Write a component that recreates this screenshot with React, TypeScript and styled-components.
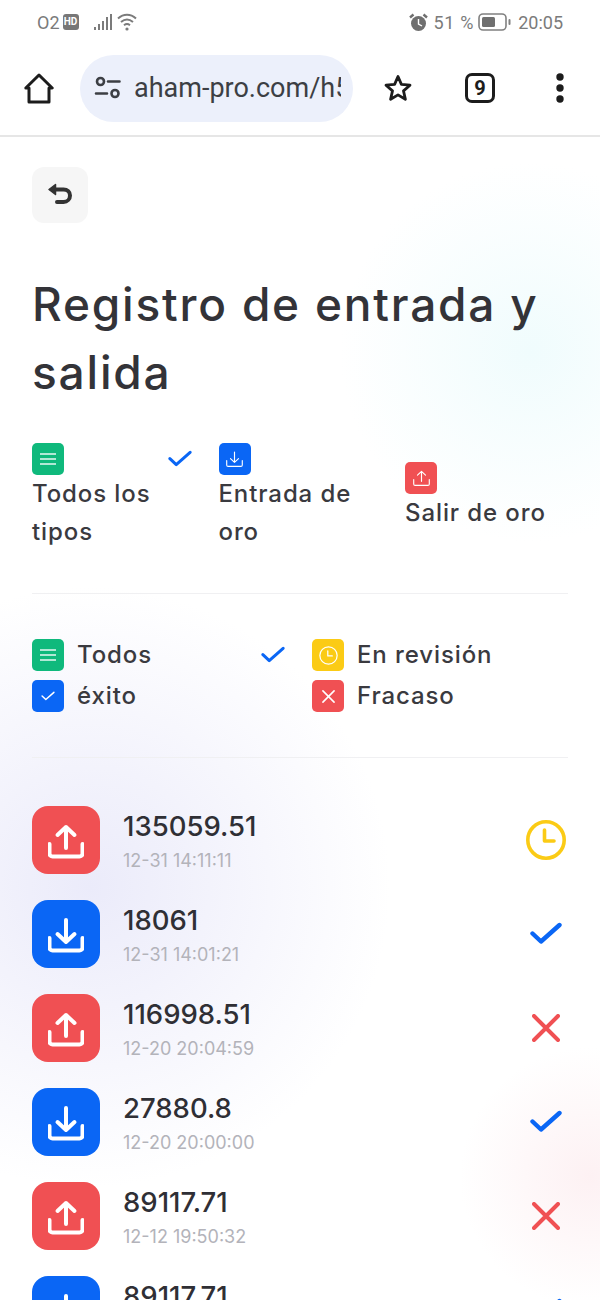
import React, { FunctionComponent } from 'react';
import styled, { createGlobalStyle } from 'styled-components';

const GlobalStyle = createGlobalStyle`
  html, body {
    margin: 0;
    padding: 0;
    background: #fff;
  }

  body {
    font-family: Inter, "Liberation Sans", sans-serif;
    color: #333338;
  }
`;

const Screen = styled.div`
  width: 600px;
  height: 1300px;
  overflow: hidden;
  display: flex;
  flex-direction: column;
`;

const StatusBar = styled.div`
  height: 44px;
  flex: none;
  display: flex;
  align-items: center;
  justify-content: space-between;
  padding: 0 37px;
  color: #7b7b7b;
  font-family: Roboto, sans-serif;
  font-size: 18px;
`;

const StatusGroup = styled.div`
  display: flex;
  align-items: center;
`;

const HdBadge = styled.span`
  margin-left: 3px;
  width: 16px;
  height: 16px;
  border-radius: 3px;
  background: #777;
  color: #fff;
  font-size: 10px;
  font-weight: 700;
  line-height: 16px;
  text-align: center;
`;

const Percent = styled.span`
  letter-spacing: 0.7px;
`;

const BrowserBar = styled.div`
  height: 93px;
  flex: none;
  display: flex;
  align-items: center;
  padding: 0 0 3px 24px;
  box-sizing: border-box;
  border-bottom: 2px solid #e6e6e6;
`;

const AddressPill = styled.div`
  width: 273px;
  height: 67px;
  margin-left: 26px;
  box-sizing: border-box;
  padding: 0 12px 0 14px;
  display: flex;
  align-items: center;
  gap: 12px;
  border-radius: 34px;
  background: #ecf0fb;
  overflow: hidden;
`;

const AddressText = styled.span`
  flex: 1;
  min-width: 0;
  overflow: hidden;
  white-space: nowrap;
  font-family: Roboto, sans-serif;
  font-size: 27px;
  color: #3c3f44;
`;

const BrowserActions = styled.div`
  flex: 1;
  display: flex;
  padding-left: 4px;
`;

const ActionSlot = styled.div`
  flex: 1;
  display: flex;
  justify-content: center;
  align-items: center;
`;

const TabCount = styled.span`
  width: 30px;
  height: 30px;
  margin-left: 3px;
  box-sizing: border-box;
  border: 3px solid #1c1c1c;
  border-radius: 7px;
  font-family: Roboto, sans-serif;
  font-size: 20px;
  font-weight: 700;
  line-height: 24px;
  text-align: center;
  color: #1c1c1c;
`;

const Page = styled.main`
  flex: 1;
  padding: 30px 32px 0;
  background:
    radial-gradient(circle 190px at 530px 215px, #f0fcfd 0%, rgba(240, 252, 253, 0) 100%),
    radial-gradient(circle 300px at 90px 750px, #ebebfa 0%, rgba(235, 235, 250, 0) 100%),
    radial-gradient(circle 130px at 590px 1040px, #fdf1f3 0%, rgba(253, 241, 243, 0) 100%),
    #fff;
`;

const BackButton = styled.button`
  display: flex;
  align-items: center;
  justify-content: center;
  width: 56px;
  height: 56px;
  padding: 0;
  border: none;
  border-radius: 12px;
  background: #f6f6f6;
`;

const Title = styled.h1`
  margin: 47px 0 0;
  font-size: 46px;
  font-weight: 500;
  line-height: 68px;
  letter-spacing: 1.8px;
  color: #333338;
`;

const TypeGrid = styled.div`
  display: grid;
  grid-template-columns: 160px 160px 163px;
  column-gap: 26.5px;
  align-items: center;
  margin-top: 37px;
  padding-bottom: 42px;
  border-bottom: 1px solid #f0f0f2;
`;

const TypeItem = styled.div`
  display: flex;
  flex-direction: column;
`;

const TypeHead = styled.div`
  display: flex;
  align-items: center;
  justify-content: space-between;
`;

const TypeLabel = styled.div`
  font-size: 24px;
  font-weight: 500;
  line-height: 38px;
  letter-spacing: 0.9px;
  color: #3a3a3f;
`;

const StatusGrid = styled.div`
  display: grid;
  grid-template-columns: 253px 253px;
  column-gap: 27px;
  row-gap: 9px;
  padding: 45px 0;
  border-bottom: 1px solid #f0f0f2;
`;

const StatusItem = styled.div`
  display: flex;
  align-items: center;
  gap: 13px;
`;

const StatusLabel = styled.span`
  flex: 1;
  font-size: 24px;
  font-weight: 500;
  line-height: 32px;
  letter-spacing: 0.9px;
  color: #3a3a3f;
`;

const ColorBox = styled.span<{ $color: string }>`
  flex: none;
  display: flex;
  align-items: center;
  justify-content: center;
  width: 32px;
  height: 32px;
  border-radius: 5px;
  background: ${p => p.$color};
`;

const RecordList = styled.div`
  display: flex;
  flex-direction: column;
  gap: 26px;
  margin-top: 48px;
`;

const RecordRow = styled.div`
  height: 68px;
  flex: none;
  display: flex;
  align-items: flex-start;
`;

const RecordIcon = styled.span<{ $color: string }>`
  flex: none;
  display: flex;
  align-items: center;
  justify-content: center;
  width: 68px;
  height: 68px;
  padding-top: 4px;
  box-sizing: border-box;
  border-radius: 16px;
  background: ${p => p.$color};
`;

const RecordText = styled.div`
  flex: 1;
  margin-left: 23px;
`;

const Amount = styled.div`
  font-size: 27.5px;
  font-weight: 500;
  line-height: 40px;
  color: #2f2f35;
`;

const RecordDate = styled.div`
  font-size: 18px;
  line-height: 30px;
  color: #b3b3ba;
`;

const RecordState = styled.div`
  flex: none;
  width: 44px;
  height: 68px;
  display: flex;
  align-items: center;
  justify-content: center;
`;

const GREEN = '#0fb97c';
const BLUE = '#0a66f5';
const RED = '#f05053';
const YELLOW = '#fbcb15';

const SignalIcon = () => (
  <svg width="20" height="18" viewBox="0 0 20 18" style={{ marginLeft: 14 }} fill="#7b7b7b">
    <rect x="1" y="14" width="2" height="3" />
    <rect x="5" y="11" width="2" height="6" />
    <rect x="9" y="8" width="2" height="9" />
    <rect x="13" y="4" width="2" height="13" />
    <rect x="17" y="1" width="2" height="16" />
  </svg>
);

const WifiIcon = () => (
  <svg width="22" height="20" viewBox="0 0 22 20" style={{ marginLeft: 4 }} fill="none" stroke="#7b7b7b" strokeWidth="2">
    <path d="M1 6.500C6.500 1.500 13.500 1.500 19 6.500" />
    <path d="M4 10c4-3.400 8-3.400 12 0" />
    <path d="M7 13.200c2-1.600 4-1.600 6 0" />
    <circle cx="10" cy="17" r="1.600" fill="#7b7b7b" stroke="none" />
  </svg>
);

const AlarmIcon = () => (
  <svg width="19" height="19" viewBox="0 0 19 19" style={{ marginRight: 5 }}>
    <circle cx="9.500" cy="10.500" r="7.500" fill="#6f6f6f" />
    <path d="M1 4.500 4.500 1.500M18 4.500 14.500 1.500" stroke="#6f6f6f" strokeWidth="2.400" fill="none" />
    <path d="M9.500 6v5l3.500 2" stroke="#fff" strokeWidth="1.400" fill="none" />
  </svg>
);

const BatteryIcon = () => (
  <svg width="33" height="18" viewBox="0 0 33 18" style={{ margin: '0 7px 0 4px' }}>
    <rect x="1" y="1" width="27" height="16" rx="4" fill="none" stroke="#808080" strokeWidth="1.600" />
    <rect x="4" y="4" width="13" height="10" rx="1.500" fill="#6f6f6f" />
    <rect x="30.500" y="6" width="2" height="6" rx="1" fill="#808080" />
  </svg>
);

const HomeIcon = () => (
  <svg width="30" height="31" viewBox="0 0 30 31" fill="none" stroke="#1c1c1c" strokeWidth="3" strokeLinejoin="round">
    <path d="M1.800 15 15 2l13.200 13H25v14H5V15z" />
  </svg>
);

const TuneIcon = () => (
  <svg width="28" height="26" viewBox="0 0 28 26" fill="none" stroke="#3c3f44" strokeWidth="2.600" strokeLinecap="round">
    <circle cx="6.500" cy="6.500" r="3.500" />
    <path d="M14 6.500h11.500M2 18.500h11" />
    <circle cx="21" cy="18.500" r="3.500" />
  </svg>
);

const StarIcon = () => (
  <svg width="30" height="30" viewBox="0 0 30 30" fill="none" stroke="#1c1c1c" strokeWidth="2.800" strokeLinejoin="round">
    <path d="M15 3.500l3.400 7.900 8.600.8-6.500 5.700 1.900 8.400L15 21.900l-7.400 4.400 1.900-8.400L3 12.200l8.600-.8z" />
  </svg>
);

const DotsIcon = () => (
  <svg width="10" height="30" viewBox="0 0 10 30" fill="#1c1c1c">
    <circle cx="5" cy="4" r="3.700" />
    <circle cx="5" cy="15" r="3.700" />
    <circle cx="5" cy="26" r="3.700" />
  </svg>
);

const BackIcon = () => (
  <svg width="30" height="30" viewBox="0 0 30 30" fill="none" stroke="#333" strokeWidth="4" strokeLinecap="round" strokeLinejoin="round">
    <path d="M8 9.500h10.500c4 0 6.500 2.700 6.500 6s-2.500 6.500-6.500 6.500H12" />
    <path d="M10.500 4.500 4 9.500l6.500 5z" fill="#333" strokeWidth="1.500" />
  </svg>
);

const CheckMark: FunctionComponent<{ size: number; color?: string; weight?: number }> = ({ size, color = BLUE, weight = 4 }) => (
  <svg width={size} height={size * 0.72} viewBox="0 0 32 23" fill="none" stroke={color} strokeWidth={weight} strokeLinecap="round" strokeLinejoin="round">
    <path d="M2.500 11.500 11 19.500 29.500 3" />
  </svg>
);

const CrossMark: FunctionComponent<{ size: number; color?: string; weight?: number }> = ({ size, color = RED, weight = 4 }) => (
  <svg width={size} height={size} viewBox="0 0 28 28" fill="none" stroke={color} strokeWidth={weight} strokeLinecap="round">
    <path d="M2 2l24 24M26 2 2 26" />
  </svg>
);

const ClockMark: FunctionComponent<{ size: number; color?: string; weight?: number }> = ({ size, color = YELLOW, weight = 3.600 }) => (
  <svg width={size} height={size} viewBox="0 0 40 40" fill="none" stroke={color} strokeWidth={weight} strokeLinecap="round" strokeLinejoin="round">
    <circle cx="20" cy="20" r="18.200" />
    <path d="M18.500 10v11h9.500" />
  </svg>
);

const MenuLines = () => (
  <svg width="18" height="14" viewBox="0 0 18 14" stroke="#fff" strokeWidth="1.500" fill="none" opacity="0.9">
    <path d="M1 2h16M1 7h16M1 12h16" />
  </svg>
);

const UploadGlyph: FunctionComponent<{ size: number; weight: number }> = ({ size, weight }) => (
  <svg width={size} height={size} viewBox="0 0 36 36" fill="none" stroke="#fff" strokeWidth={weight} strokeLinecap="round" strokeLinejoin="round">
    <path d="M18 24V3M9.500 11 18 3l8.500 8" />
    <path d="M1.500 20v9.500a3 3 0 0 0 3 3h27a3 3 0 0 0 3-3V20" />
  </svg>
);

const DownloadGlyph: FunctionComponent<{ size: number; weight: number }> = ({ size, weight }) => (
  <svg width={size} height={size} viewBox="0 0 36 36" fill="none" stroke="#fff" strokeWidth={weight} strokeLinecap="round" strokeLinejoin="round">
    <path d="M18 2v22M9.500 16l8.500 8 8.500-8" />
    <path d="M1.500 20v9.500a3 3 0 0 0 3 3h27a3 3 0 0 0 3-3V20" />
  </svg>
);

type RecordData = {
  kind: 'out' | 'in';
  amount: string;
  date: string;
  state: 'pending' | 'ok' | 'fail';
};

const records: RecordData[] = [
  { kind: 'out', amount: '135059.51', date: '12-31 14:11:11', state: 'pending' },
  { kind: 'in', amount: '18061', date: '12-31 14:01:21', state: 'ok' },
  { kind: 'out', amount: '116998.51', date: '12-20 20:04:59', state: 'fail' },
  { kind: 'in', amount: '27880.8', date: '12-20 20:00:00', state: 'ok' },
  { kind: 'out', amount: '89117.71', date: '12-12 19:50:32', state: 'fail' },
  { kind: 'in', amount: '89117.71', date: '12-12 19:40:10', state: 'ok' },
];

const App: FunctionComponent = () => (
  <Screen>
    <GlobalStyle />
    <StatusBar>
      <StatusGroup>
        O2
        <HdBadge>HD</HdBadge>
        <SignalIcon />
        <WifiIcon />
      </StatusGroup>
      <StatusGroup>
        <AlarmIcon />
        <Percent>51 %</Percent>
        <BatteryIcon />
        20:05
      </StatusGroup>
    </StatusBar>
    <BrowserBar>
      <HomeIcon />
      <AddressPill>
        <TuneIcon />
        <AddressText>aham-pro.com/h5</AddressText>
      </AddressPill>
      <BrowserActions>
        <ActionSlot>
          <StarIcon />
        </ActionSlot>
        <ActionSlot>
          <TabCount>9</TabCount>
        </ActionSlot>
        <ActionSlot>
          <DotsIcon />
        </ActionSlot>
      </BrowserActions>
    </BrowserBar>
    <Page>
      <BackButton aria-label="back">
        <BackIcon />
      </BackButton>
      <Title>Registro de entrada y salida</Title>
      <TypeGrid>
        <TypeItem>
          <TypeHead>
            <ColorBox $color={GREEN}>
              <MenuLines />
            </ColorBox>
            <CheckMark size={24} />
          </TypeHead>
          <TypeLabel>Todos los tipos</TypeLabel>
        </TypeItem>
        <TypeItem>
          <TypeHead>
            <ColorBox $color={BLUE}>
              <DownloadGlyph size={17} weight={2.400} />
            </ColorBox>
          </TypeHead>
          <TypeLabel>Entrada de oro</TypeLabel>
        </TypeItem>
        <TypeItem>
          <TypeHead>
            <ColorBox $color={RED}>
              <UploadGlyph size={17} weight={2.400} />
            </ColorBox>
          </TypeHead>
          <TypeLabel>Salir de oro</TypeLabel>
        </TypeItem>
      </TypeGrid>
      <StatusGrid>
        <StatusItem>
          <ColorBox $color={GREEN}>
            <MenuLines />
          </ColorBox>
          <StatusLabel>Todos</StatusLabel>
          <CheckMark size={24} />
        </StatusItem>
        <StatusItem>
          <ColorBox $color={YELLOW}>
            <ClockMark size={19} color="#fff" weight={2.600} />
          </ColorBox>
          <StatusLabel>En revisión</StatusLabel>
        </StatusItem>
        <StatusItem>
          <ColorBox $color={BLUE}>
            <CheckMark size={14} color="#fff" weight={3.400} />
          </ColorBox>
          <StatusLabel>éxito</StatusLabel>
        </StatusItem>
        <StatusItem>
          <ColorBox $color={RED}>
            <CrossMark size={13} color="#fff" weight={3.400} />
          </ColorBox>
          <StatusLabel>Fracaso</StatusLabel>
        </StatusItem>
      </StatusGrid>
      <RecordList>
        {records.map(record => (
          <RecordRow key={record.date}>
            <RecordIcon $color={record.kind === 'out' ? RED : BLUE}>
              {record.kind === 'out' ? <UploadGlyph size={36} weight={4} /> : <DownloadGlyph size={36} weight={4} />}
            </RecordIcon>
            <RecordText>
              <Amount>{record.amount}</Amount>
              <RecordDate>{record.date}</RecordDate>
            </RecordText>
            <RecordState>
              {record.state === 'pending' && <ClockMark size={40} />}
              {record.state === 'ok' && <CheckMark size={32} weight={4.400} />}
              {record.state === 'fail' && <CrossMark size={28} />}
            </RecordState>
          </RecordRow>
        ))}
      </RecordList>
    </Page>
  </Screen>
);

export default App;
